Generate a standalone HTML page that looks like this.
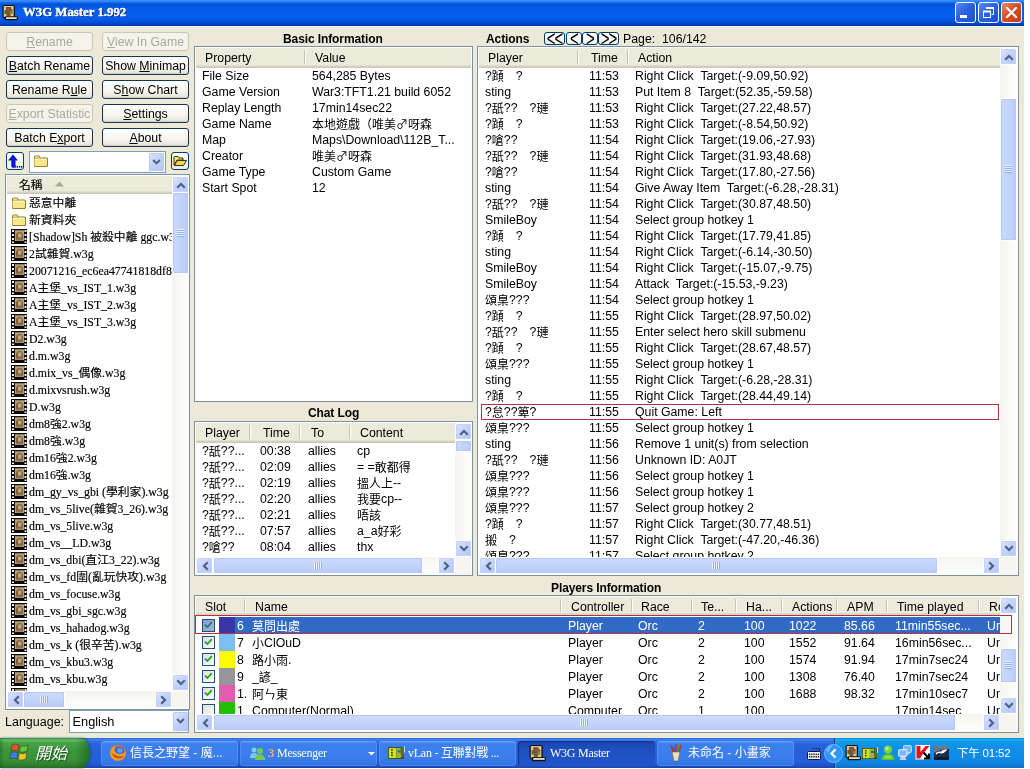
<!DOCTYPE html>
<html lang="zh-Hant"><head><meta charset="utf-8"><title>W3G Master 1.992</title>
<style>
html,body{margin:0;padding:0;background:#fff;overflow:hidden}
body{width:1030px;height:769px;position:relative;will-change:transform;font:12px "Liberation Sans","Noto Sans CJK TC",sans-serif;color:#000}
body div{position:absolute;box-sizing:content-box}
.t{white-space:nowrap;font:12.3px/16px "Liberation Sans","Noto Sans CJK TC",sans-serif;color:#000}
.b{white-space:nowrap;letter-spacing:-.1px;font:bold 12px/16px "Liberation Sans","Noto Sans CJK TC",sans-serif;color:#000}
.f{white-space:nowrap;font:11.8px/17px "Liberation Serif","Noto Sans CJK TC",serif;color:#000;-webkit-text-stroke:.15px #000}
.w{color:#fff}
.lv{border:1px solid #7e91a2;background:#fff}
.hd{background:linear-gradient(#ebeadb 0,#ebeadb calc(100% - 3px),#e2decd calc(100% - 3px),#e2decd calc(100% - 2px),#d6d2c2 calc(100% - 2px),#d6d2c2 calc(100% - 1px),#cbc7b8 calc(100% - 1px))}
.vtrack{background:linear-gradient(90deg,#f5f4ef,#fefefd)}
.htrack{background:linear-gradient(#f5f4ef,#fefefd)}
.vgrip{left:4px;width:7px;height:8px;background:repeating-linear-gradient(#eef4fe 0,#eef4fe 1px,#8cb0f8 1px,#8cb0f8 2px)}
.hgrip{top:4px;height:7px;width:8px;background:repeating-linear-gradient(90deg,#eef4fe 0,#eef4fe 1px,#8cb0f8 1px,#8cb0f8 2px)}
.btn{border:1px solid #143456;padding-top:1px;margin-top:0;border-radius:3px;background:linear-gradient(#fff,#f6f5ef 60%,#e3e1d6);text-align:center;white-space:nowrap;font:12.3px "Liberation Sans",sans-serif;color:#000;box-shadow:inset 0 -1px 1px #d6d0c5}
.btn.dis{border-color:#c9c7ba;background:#f5f4ea;color:#aca899;box-shadow:none}
.btn u{text-decoration:underline;text-underline-offset:1px}
.ttl{white-space:nowrap;font:bold 12.8px/16px "Liberation Serif","Noto Serif CJK SC",serif;color:#fff;text-shadow:1px 1px 0 #0a2a8a;-webkit-text-stroke:.4px #fff}
.nav{border:1px solid #003c74;border-radius:3px;background:linear-gradient(#fff,#f0efe8);text-align:center;font:15px/9px "Liberation Sans",sans-serif;color:#000;overflow:hidden;letter-spacing:-1px}
.st{white-space:nowrap;font:italic 400 16px/20px "Liberation Sans","Noto Sans CJK TC",sans-serif;color:#fff;text-shadow:1px 1px 1px #1a4a1a}
.tk{white-space:nowrap;font:12px/16px "Liberation Sans","Noto Sans CJK TC",sans-serif;color:#fff}
.tks{font-family:"Liberation Serif","Noto Sans CJK TC",serif;font-size:12px;letter-spacing:-.25px}
.sb{border-radius:2px;background:linear-gradient(135deg,#dfe8fe,#c6d5fd 40%,#b3c6f6);box-shadow:inset 0 0 0 1px #c3d3fb,inset 0 -1px 0 #9db4ea,0 0 0 1px #fff}
.thumb{border-radius:2px;box-shadow:inset 0 0 0 1px #b5c8f6,inset -1px -1px 0 #9db4ea,0 0 0 1px #fff}
.vth{background:linear-gradient(90deg,#cbdafd,#c3d4fc 50%,#b9cbf8)}
.hth{background:linear-gradient(#cbdafd,#c3d4fc 50%,#b9cbf8)}
.nav span{position:relative;top:1px;display:inline-block;transform:scale(1,1.5);transform-origin:50% 75%}
.cj{font-family:"Noto Sans CJK TC","Noto Sans CJK JP",sans-serif}
.c{position:relative;top:1px;line-height:0;font-size:12px;font-family:"Noto Sans CJK TC","Noto Sans CJK JP",sans-serif}

</style></head>
<body>
<div style="left:0px;top:0px;width:1024px;height:768px;background:#ece9d8"></div>
<div style="left:0px;top:0px;width:1024px;height:26px;background:linear-gradient(#3a8ffa 0,#338af8 1px,#1a6eee 2.5px,#0453dc 4px,#0354de 6px,#045ce8 9px,#0560f0 14px,#045aea 19px,#0350da 22px,#0243c6 24px,#0138aa 26px)"></div>
<div style="left:0px;top:26px;width:1024px;height:1px;background:#f6f4ea"></div>
<svg style="position:absolute;left:2px;top:5px" width="16" height="16" viewBox="0 0 16 16"><rect x="0.5" y="0" width="12.5" height="13" rx="1.5" fill="#14100c"/><rect x="1.7" y="1" width="10" height="11" fill="#d6c69c"/><path d="M4 2h5v2h1.5v5h-2v2h-4v-2h-2v-4h1.5z" fill="#6e5a2c"/><rect x="5.5" y="3" width="2.5" height="3" fill="#a4463c"/><rect x="8" y="6" width="2" height="3" fill="#8a8a3c"/><rect x="2.5" y="11.2" width="13.5" height="4" rx="1.5" fill="#14100c"/><rect x="4" y="12.2" width="10.8" height="1.8" fill="#e9dcc0"/></svg>
<div class="ttl" style="left:23px;top:4px;">W3G Master 1.992</div>
<div style="left:955px;top:2px;width:19px;height:19px;border:1px solid #fff;border-radius:3px;background:linear-gradient(135deg,#5d8cf0,#2a62e0 45%,#1c4fcc)"></div>
<div style="left:978px;top:2px;width:19px;height:19px;border:1px solid #fff;border-radius:3px;background:linear-gradient(135deg,#5d8cf0,#2a62e0 45%,#1c4fcc)"></div>
<div style="left:1001px;top:2px;width:19px;height:19px;border:1px solid #fff;border-radius:3px;background:linear-gradient(135deg,#e88a6a,#d8502a 45%,#c23a12)"></div>
<svg style="position:absolute;left:955px;top:2px" width="21" height="21"><rect x="5" y="13" width="7" height="3" fill="#fff"/></svg>
<svg style="position:absolute;left:978px;top:2px" width="21" height="21" fill="none" stroke="#fff"><path d="M8.5 6.5h7v6h-2" stroke-width="1"/><path d="M8 6h8" stroke-width="2"/><rect x="5.5" y="9.5" width="7" height="6"/><path d="M5 9.5h8" stroke-width="2"/></svg>
<svg style="position:absolute;left:1001px;top:2px" width="21" height="21" stroke="#fff" stroke-width="2.2" stroke-linecap="round"><path d="M6 6l9 9M15 6l-9 9"/></svg>
<div class="btn dis" style="left:6px;top:32px;width:85px;height:16px;line-height:16px"><u>R</u>ename</div>
<div class="btn dis" style="left:102px;top:32px;width:85px;height:16px;line-height:16px"><u>V</u>iew In Game</div>
<div class="btn" style="left:6px;top:56px;width:85px;height:16px;line-height:16px"><u>B</u>atch Rename</div>
<div class="btn" style="left:102px;top:56px;width:85px;height:16px;line-height:16px">Show <u>M</u>inimap</div>
<div class="btn" style="left:6px;top:80px;width:85px;height:16px;line-height:16px">Rename R<u>u</u>le</div>
<div class="btn" style="left:102px;top:80px;width:85px;height:16px;line-height:16px">S<u>h</u>ow Chart</div>
<div class="btn dis" style="left:6px;top:104px;width:85px;height:16px;line-height:16px"><u>E</u>xport Statistic</div>
<div class="btn" style="left:102px;top:104px;width:85px;height:16px;line-height:16px"><u>S</u>ettings</div>
<div class="btn" style="left:6px;top:128px;width:85px;height:16px;line-height:16px">Batch E<u>x</u>port</div>
<div class="btn" style="left:102px;top:128px;width:85px;height:16px;line-height:16px"><u>A</u>bout</div>
<div style="left:6px;top:152px;width:16px;height:16px;border:1px solid #003c74;border-radius:3px;background:linear-gradient(#fff,#ecebe5)"></div>
<svg style="position:absolute;left:6px;top:152px" width="18" height="18" viewBox="0 0 18 18"><path d="M7 2.8 L2.6 8.2 H5.6 V14 Q5.6 15.6 7.2 15.6 H9.6 V13.4 H9.2 V8.2 H11.4 Z" fill="#0a14dc" stroke="#060c8c" stroke-width=".5"/><rect x="10.6" y="14" width="1.4" height="1.6" fill="#101890"/><rect x="12.8" y="14" width="1.4" height="1.6" fill="#101890"/><rect x="15" y="14" width="1.4" height="1.6" fill="#101890"/></svg>
<div style="left:29px;top:151px;width:135px;height:20px;border:1px solid #7f9db9;background:#fff"></div>
<div style="left:149px;top:153px;width:15px;height:18px;border-radius:2px;background:linear-gradient(135deg,#e1eafe,#c3d3fd 45%,#b0c4f4);box-shadow:inset 0 0 0 1px #b7caf5"><svg width="9" height="9" viewBox="0 0 9 9" style="position:absolute;left:3px;top:5px"><path d="M0.4 2.7 L4.5 6.8 L8.6 2.7 L7.2 1.3 L4.5 4 L1.8 1.3Z" fill="#4d6185"/></svg></div>
<svg style="position:absolute;left:33px;top:153px" width="16" height="16" viewBox="0 0 16 16"><path d="M1 4 Q1 2.5 2.5 2.5 H5.5 Q6.5 2.5 7 3.5 L7.5 4.5 H13.5 Q15 4.5 15 6 V12.5 Q15 14 13.5 14 H2.5 Q1 14 1 12.5 Z" fill="#94802c"/><path d="M1.5 6.5 Q1.5 5.5 2.5 5.5 H13 Q14 5.5 14 6.5 V12 Q14 13 13 13 H2.5 Q1.5 13 1.5 12 Z" fill="#f6e78a"/><path d="M2 4 Q2 3.3 2.8 3.3 H5.6 L6.6 5 H2Z" fill="#efd96a"/><path d="M2.2 6.3 H13.3" stroke="#fffbd8" stroke-width="1"/></svg>
<div style="left:171px;top:152px;width:16px;height:16px;border:1px solid #003c74;border-radius:3px;background:linear-gradient(#fff,#ecebe5)"></div>
<svg style="position:absolute;left:172px;top:153px" width="16" height="16" viewBox="0 0 16 16"><path d="M2 4.5 Q2 3.5 3 3.5 H6 L7 5 H11 V7 H5 L2 12Z" fill="#f7e38a" stroke="#3a3000" stroke-width="1"/><path d="M2.5 12.5 L5.2 7.5 H14.5 L11.5 12.5Z" fill="#f2d65c" stroke="#3a3000" stroke-width="1"/></svg>
<div class="lv" style="left:5px;top:174px;width:183px;height:534px;"></div>
<div class="hd" style="left:7px;top:176px;width:165px;height:18px;"></div>
<div class="f" style="left:19px;top:176px;line-height:18px">名稱</div>
<svg style="position:absolute;left:55px;top:181px" width="9" height="6"><path d="M0 5.5 L4.5 0.5 L9 5.5Z" fill="#aca899"/></svg>
<div style="left:7px;top:194px;width:165px;height:497px;overflow:hidden">
<svg style="position:absolute;left:4px;top:1px" width="16" height="16" viewBox="0 0 16 16"><path d="M1 4 Q1 2.5 2.5 2.5 H5.5 Q6.5 2.5 7 3.5 L7.5 4.5 H13.5 Q15 4.5 15 6 V12.5 Q15 14 13.5 14 H2.5 Q1 14 1 12.5 Z" fill="#94802c"/><path d="M1.5 6.5 Q1.5 5.5 2.5 5.5 H13 Q14 5.5 14 6.5 V12 Q14 13 13 13 H2.5 Q1.5 13 1.5 12 Z" fill="#f6e78a"/><path d="M2 4 Q2 3.3 2.8 3.3 H5.6 L6.6 5 H2Z" fill="#efd96a"/><path d="M2.2 6.3 H13.3" stroke="#fffbd8" stroke-width="1"/></svg>
<div class="f" style="left:22px;top:1px;">惡意中離</div>
<svg style="position:absolute;left:4px;top:18px" width="16" height="16" viewBox="0 0 16 16"><path d="M1 4 Q1 2.5 2.5 2.5 H5.5 Q6.5 2.5 7 3.5 L7.5 4.5 H13.5 Q15 4.5 15 6 V12.5 Q15 14 13.5 14 H2.5 Q1 14 1 12.5 Z" fill="#94802c"/><path d="M1.5 6.5 Q1.5 5.5 2.5 5.5 H13 Q14 5.5 14 6.5 V12 Q14 13 13 13 H2.5 Q1.5 13 1.5 12 Z" fill="#f6e78a"/><path d="M2 4 Q2 3.3 2.8 3.3 H5.6 L6.6 5 H2Z" fill="#efd96a"/><path d="M2.2 6.3 H13.3" stroke="#fffbd8" stroke-width="1"/></svg>
<div class="f" style="left:22px;top:18px;">新資料夾</div>
<svg style="position:absolute;left:4px;top:35px" width="16" height="16" viewBox="0 0 16 16"><rect x="0" y="0" width="16" height="15" fill="#0c0a08"/><rect x="4" y="1" width="9" height="11" fill="#b9a27a"/><path d="M5 11 V7 Q5 3 8.5 3 Q12 3 12 7 V11Z" fill="#7a5d3c"/><rect x="7" y="4.5" width="3.5" height="4" fill="#caa878"/><rect x="5" y="9.5" width="7" height="2" fill="#8f7452"/><rect x="4" y="1" width="9" height="1" fill="#8a7a5c"/><g fill="#f4f2ea"><rect x="1" y="1" width="2" height="2"/><rect x="1" y="5" width="2" height="2"/><rect x="1" y="9" width="2" height="2"/><rect x="1" y="12.5" width="2" height="1.5"/><rect x="13.5" y="1" width="2" height="2"/><rect x="13.5" y="5" width="2" height="2"/><rect x="13.5" y="9" width="2" height="2"/><rect x="13.5" y="12.5" width="2" height="1.5"/></g></svg>
<div class="f" style="left:22px;top:35px;">[Shadow]Sh 被殺中離 ggc.w3g</div>
<svg style="position:absolute;left:4px;top:52px" width="16" height="16" viewBox="0 0 16 16"><rect x="0" y="0" width="16" height="15" fill="#0c0a08"/><rect x="4" y="1" width="9" height="11" fill="#b9a27a"/><path d="M5 11 V7 Q5 3 8.5 3 Q12 3 12 7 V11Z" fill="#7a5d3c"/><rect x="7" y="4.5" width="3.5" height="4" fill="#caa878"/><rect x="5" y="9.5" width="7" height="2" fill="#8f7452"/><rect x="4" y="1" width="9" height="1" fill="#8a7a5c"/><g fill="#f4f2ea"><rect x="1" y="1" width="2" height="2"/><rect x="1" y="5" width="2" height="2"/><rect x="1" y="9" width="2" height="2"/><rect x="1" y="12.5" width="2" height="1.5"/><rect x="13.5" y="1" width="2" height="2"/><rect x="13.5" y="5" width="2" height="2"/><rect x="13.5" y="9" width="2" height="2"/><rect x="13.5" y="12.5" width="2" height="1.5"/></g></svg>
<div class="f" style="left:22px;top:52px;">2試雜賀.w3g</div>
<svg style="position:absolute;left:4px;top:69px" width="16" height="16" viewBox="0 0 16 16"><rect x="0" y="0" width="16" height="15" fill="#0c0a08"/><rect x="4" y="1" width="9" height="11" fill="#b9a27a"/><path d="M5 11 V7 Q5 3 8.5 3 Q12 3 12 7 V11Z" fill="#7a5d3c"/><rect x="7" y="4.5" width="3.5" height="4" fill="#caa878"/><rect x="5" y="9.5" width="7" height="2" fill="#8f7452"/><rect x="4" y="1" width="9" height="1" fill="#8a7a5c"/><g fill="#f4f2ea"><rect x="1" y="1" width="2" height="2"/><rect x="1" y="5" width="2" height="2"/><rect x="1" y="9" width="2" height="2"/><rect x="1" y="12.5" width="2" height="1.5"/><rect x="13.5" y="1" width="2" height="2"/><rect x="13.5" y="5" width="2" height="2"/><rect x="13.5" y="9" width="2" height="2"/><rect x="13.5" y="12.5" width="2" height="1.5"/></g></svg>
<div class="f" style="left:22px;top:69px;">20071216_ec6ea47741818df88</div>
<svg style="position:absolute;left:4px;top:86px" width="16" height="16" viewBox="0 0 16 16"><rect x="0" y="0" width="16" height="15" fill="#0c0a08"/><rect x="4" y="1" width="9" height="11" fill="#b9a27a"/><path d="M5 11 V7 Q5 3 8.5 3 Q12 3 12 7 V11Z" fill="#7a5d3c"/><rect x="7" y="4.5" width="3.5" height="4" fill="#caa878"/><rect x="5" y="9.5" width="7" height="2" fill="#8f7452"/><rect x="4" y="1" width="9" height="1" fill="#8a7a5c"/><g fill="#f4f2ea"><rect x="1" y="1" width="2" height="2"/><rect x="1" y="5" width="2" height="2"/><rect x="1" y="9" width="2" height="2"/><rect x="1" y="12.5" width="2" height="1.5"/><rect x="13.5" y="1" width="2" height="2"/><rect x="13.5" y="5" width="2" height="2"/><rect x="13.5" y="9" width="2" height="2"/><rect x="13.5" y="12.5" width="2" height="1.5"/></g></svg>
<div class="f" style="left:22px;top:86px;">A主堡_vs_IST_1.w3g</div>
<svg style="position:absolute;left:4px;top:103px" width="16" height="16" viewBox="0 0 16 16"><rect x="0" y="0" width="16" height="15" fill="#0c0a08"/><rect x="4" y="1" width="9" height="11" fill="#b9a27a"/><path d="M5 11 V7 Q5 3 8.5 3 Q12 3 12 7 V11Z" fill="#7a5d3c"/><rect x="7" y="4.5" width="3.5" height="4" fill="#caa878"/><rect x="5" y="9.5" width="7" height="2" fill="#8f7452"/><rect x="4" y="1" width="9" height="1" fill="#8a7a5c"/><g fill="#f4f2ea"><rect x="1" y="1" width="2" height="2"/><rect x="1" y="5" width="2" height="2"/><rect x="1" y="9" width="2" height="2"/><rect x="1" y="12.5" width="2" height="1.5"/><rect x="13.5" y="1" width="2" height="2"/><rect x="13.5" y="5" width="2" height="2"/><rect x="13.5" y="9" width="2" height="2"/><rect x="13.5" y="12.5" width="2" height="1.5"/></g></svg>
<div class="f" style="left:22px;top:103px;">A主堡_vs_IST_2.w3g</div>
<svg style="position:absolute;left:4px;top:120px" width="16" height="16" viewBox="0 0 16 16"><rect x="0" y="0" width="16" height="15" fill="#0c0a08"/><rect x="4" y="1" width="9" height="11" fill="#b9a27a"/><path d="M5 11 V7 Q5 3 8.5 3 Q12 3 12 7 V11Z" fill="#7a5d3c"/><rect x="7" y="4.5" width="3.5" height="4" fill="#caa878"/><rect x="5" y="9.5" width="7" height="2" fill="#8f7452"/><rect x="4" y="1" width="9" height="1" fill="#8a7a5c"/><g fill="#f4f2ea"><rect x="1" y="1" width="2" height="2"/><rect x="1" y="5" width="2" height="2"/><rect x="1" y="9" width="2" height="2"/><rect x="1" y="12.5" width="2" height="1.5"/><rect x="13.5" y="1" width="2" height="2"/><rect x="13.5" y="5" width="2" height="2"/><rect x="13.5" y="9" width="2" height="2"/><rect x="13.5" y="12.5" width="2" height="1.5"/></g></svg>
<div class="f" style="left:22px;top:120px;">A主堡_vs_IST_3.w3g</div>
<svg style="position:absolute;left:4px;top:137px" width="16" height="16" viewBox="0 0 16 16"><rect x="0" y="0" width="16" height="15" fill="#0c0a08"/><rect x="4" y="1" width="9" height="11" fill="#b9a27a"/><path d="M5 11 V7 Q5 3 8.5 3 Q12 3 12 7 V11Z" fill="#7a5d3c"/><rect x="7" y="4.5" width="3.5" height="4" fill="#caa878"/><rect x="5" y="9.5" width="7" height="2" fill="#8f7452"/><rect x="4" y="1" width="9" height="1" fill="#8a7a5c"/><g fill="#f4f2ea"><rect x="1" y="1" width="2" height="2"/><rect x="1" y="5" width="2" height="2"/><rect x="1" y="9" width="2" height="2"/><rect x="1" y="12.5" width="2" height="1.5"/><rect x="13.5" y="1" width="2" height="2"/><rect x="13.5" y="5" width="2" height="2"/><rect x="13.5" y="9" width="2" height="2"/><rect x="13.5" y="12.5" width="2" height="1.5"/></g></svg>
<div class="f" style="left:22px;top:137px;">D2.w3g</div>
<svg style="position:absolute;left:4px;top:154px" width="16" height="16" viewBox="0 0 16 16"><rect x="0" y="0" width="16" height="15" fill="#0c0a08"/><rect x="4" y="1" width="9" height="11" fill="#b9a27a"/><path d="M5 11 V7 Q5 3 8.5 3 Q12 3 12 7 V11Z" fill="#7a5d3c"/><rect x="7" y="4.5" width="3.5" height="4" fill="#caa878"/><rect x="5" y="9.5" width="7" height="2" fill="#8f7452"/><rect x="4" y="1" width="9" height="1" fill="#8a7a5c"/><g fill="#f4f2ea"><rect x="1" y="1" width="2" height="2"/><rect x="1" y="5" width="2" height="2"/><rect x="1" y="9" width="2" height="2"/><rect x="1" y="12.5" width="2" height="1.5"/><rect x="13.5" y="1" width="2" height="2"/><rect x="13.5" y="5" width="2" height="2"/><rect x="13.5" y="9" width="2" height="2"/><rect x="13.5" y="12.5" width="2" height="1.5"/></g></svg>
<div class="f" style="left:22px;top:154px;">d.m.w3g</div>
<svg style="position:absolute;left:4px;top:171px" width="16" height="16" viewBox="0 0 16 16"><rect x="0" y="0" width="16" height="15" fill="#0c0a08"/><rect x="4" y="1" width="9" height="11" fill="#b9a27a"/><path d="M5 11 V7 Q5 3 8.5 3 Q12 3 12 7 V11Z" fill="#7a5d3c"/><rect x="7" y="4.5" width="3.5" height="4" fill="#caa878"/><rect x="5" y="9.5" width="7" height="2" fill="#8f7452"/><rect x="4" y="1" width="9" height="1" fill="#8a7a5c"/><g fill="#f4f2ea"><rect x="1" y="1" width="2" height="2"/><rect x="1" y="5" width="2" height="2"/><rect x="1" y="9" width="2" height="2"/><rect x="1" y="12.5" width="2" height="1.5"/><rect x="13.5" y="1" width="2" height="2"/><rect x="13.5" y="5" width="2" height="2"/><rect x="13.5" y="9" width="2" height="2"/><rect x="13.5" y="12.5" width="2" height="1.5"/></g></svg>
<div class="f" style="left:22px;top:171px;">d.mix_vs_偶像.w3g</div>
<svg style="position:absolute;left:4px;top:188px" width="16" height="16" viewBox="0 0 16 16"><rect x="0" y="0" width="16" height="15" fill="#0c0a08"/><rect x="4" y="1" width="9" height="11" fill="#b9a27a"/><path d="M5 11 V7 Q5 3 8.5 3 Q12 3 12 7 V11Z" fill="#7a5d3c"/><rect x="7" y="4.5" width="3.5" height="4" fill="#caa878"/><rect x="5" y="9.5" width="7" height="2" fill="#8f7452"/><rect x="4" y="1" width="9" height="1" fill="#8a7a5c"/><g fill="#f4f2ea"><rect x="1" y="1" width="2" height="2"/><rect x="1" y="5" width="2" height="2"/><rect x="1" y="9" width="2" height="2"/><rect x="1" y="12.5" width="2" height="1.5"/><rect x="13.5" y="1" width="2" height="2"/><rect x="13.5" y="5" width="2" height="2"/><rect x="13.5" y="9" width="2" height="2"/><rect x="13.5" y="12.5" width="2" height="1.5"/></g></svg>
<div class="f" style="left:22px;top:188px;">d.mixvsrush.w3g</div>
<svg style="position:absolute;left:4px;top:205px" width="16" height="16" viewBox="0 0 16 16"><rect x="0" y="0" width="16" height="15" fill="#0c0a08"/><rect x="4" y="1" width="9" height="11" fill="#b9a27a"/><path d="M5 11 V7 Q5 3 8.5 3 Q12 3 12 7 V11Z" fill="#7a5d3c"/><rect x="7" y="4.5" width="3.5" height="4" fill="#caa878"/><rect x="5" y="9.5" width="7" height="2" fill="#8f7452"/><rect x="4" y="1" width="9" height="1" fill="#8a7a5c"/><g fill="#f4f2ea"><rect x="1" y="1" width="2" height="2"/><rect x="1" y="5" width="2" height="2"/><rect x="1" y="9" width="2" height="2"/><rect x="1" y="12.5" width="2" height="1.5"/><rect x="13.5" y="1" width="2" height="2"/><rect x="13.5" y="5" width="2" height="2"/><rect x="13.5" y="9" width="2" height="2"/><rect x="13.5" y="12.5" width="2" height="1.5"/></g></svg>
<div class="f" style="left:22px;top:205px;">D.w3g</div>
<svg style="position:absolute;left:4px;top:222px" width="16" height="16" viewBox="0 0 16 16"><rect x="0" y="0" width="16" height="15" fill="#0c0a08"/><rect x="4" y="1" width="9" height="11" fill="#b9a27a"/><path d="M5 11 V7 Q5 3 8.5 3 Q12 3 12 7 V11Z" fill="#7a5d3c"/><rect x="7" y="4.5" width="3.5" height="4" fill="#caa878"/><rect x="5" y="9.5" width="7" height="2" fill="#8f7452"/><rect x="4" y="1" width="9" height="1" fill="#8a7a5c"/><g fill="#f4f2ea"><rect x="1" y="1" width="2" height="2"/><rect x="1" y="5" width="2" height="2"/><rect x="1" y="9" width="2" height="2"/><rect x="1" y="12.5" width="2" height="1.5"/><rect x="13.5" y="1" width="2" height="2"/><rect x="13.5" y="5" width="2" height="2"/><rect x="13.5" y="9" width="2" height="2"/><rect x="13.5" y="12.5" width="2" height="1.5"/></g></svg>
<div class="f" style="left:22px;top:222px;">dm8強2.w3g</div>
<svg style="position:absolute;left:4px;top:239px" width="16" height="16" viewBox="0 0 16 16"><rect x="0" y="0" width="16" height="15" fill="#0c0a08"/><rect x="4" y="1" width="9" height="11" fill="#b9a27a"/><path d="M5 11 V7 Q5 3 8.5 3 Q12 3 12 7 V11Z" fill="#7a5d3c"/><rect x="7" y="4.5" width="3.5" height="4" fill="#caa878"/><rect x="5" y="9.5" width="7" height="2" fill="#8f7452"/><rect x="4" y="1" width="9" height="1" fill="#8a7a5c"/><g fill="#f4f2ea"><rect x="1" y="1" width="2" height="2"/><rect x="1" y="5" width="2" height="2"/><rect x="1" y="9" width="2" height="2"/><rect x="1" y="12.5" width="2" height="1.5"/><rect x="13.5" y="1" width="2" height="2"/><rect x="13.5" y="5" width="2" height="2"/><rect x="13.5" y="9" width="2" height="2"/><rect x="13.5" y="12.5" width="2" height="1.5"/></g></svg>
<div class="f" style="left:22px;top:239px;">dm8強.w3g</div>
<svg style="position:absolute;left:4px;top:256px" width="16" height="16" viewBox="0 0 16 16"><rect x="0" y="0" width="16" height="15" fill="#0c0a08"/><rect x="4" y="1" width="9" height="11" fill="#b9a27a"/><path d="M5 11 V7 Q5 3 8.5 3 Q12 3 12 7 V11Z" fill="#7a5d3c"/><rect x="7" y="4.5" width="3.5" height="4" fill="#caa878"/><rect x="5" y="9.5" width="7" height="2" fill="#8f7452"/><rect x="4" y="1" width="9" height="1" fill="#8a7a5c"/><g fill="#f4f2ea"><rect x="1" y="1" width="2" height="2"/><rect x="1" y="5" width="2" height="2"/><rect x="1" y="9" width="2" height="2"/><rect x="1" y="12.5" width="2" height="1.5"/><rect x="13.5" y="1" width="2" height="2"/><rect x="13.5" y="5" width="2" height="2"/><rect x="13.5" y="9" width="2" height="2"/><rect x="13.5" y="12.5" width="2" height="1.5"/></g></svg>
<div class="f" style="left:22px;top:256px;">dm16強2.w3g</div>
<svg style="position:absolute;left:4px;top:273px" width="16" height="16" viewBox="0 0 16 16"><rect x="0" y="0" width="16" height="15" fill="#0c0a08"/><rect x="4" y="1" width="9" height="11" fill="#b9a27a"/><path d="M5 11 V7 Q5 3 8.5 3 Q12 3 12 7 V11Z" fill="#7a5d3c"/><rect x="7" y="4.5" width="3.5" height="4" fill="#caa878"/><rect x="5" y="9.5" width="7" height="2" fill="#8f7452"/><rect x="4" y="1" width="9" height="1" fill="#8a7a5c"/><g fill="#f4f2ea"><rect x="1" y="1" width="2" height="2"/><rect x="1" y="5" width="2" height="2"/><rect x="1" y="9" width="2" height="2"/><rect x="1" y="12.5" width="2" height="1.5"/><rect x="13.5" y="1" width="2" height="2"/><rect x="13.5" y="5" width="2" height="2"/><rect x="13.5" y="9" width="2" height="2"/><rect x="13.5" y="12.5" width="2" height="1.5"/></g></svg>
<div class="f" style="left:22px;top:273px;">dm16強.w3g</div>
<svg style="position:absolute;left:4px;top:290px" width="16" height="16" viewBox="0 0 16 16"><rect x="0" y="0" width="16" height="15" fill="#0c0a08"/><rect x="4" y="1" width="9" height="11" fill="#b9a27a"/><path d="M5 11 V7 Q5 3 8.5 3 Q12 3 12 7 V11Z" fill="#7a5d3c"/><rect x="7" y="4.5" width="3.5" height="4" fill="#caa878"/><rect x="5" y="9.5" width="7" height="2" fill="#8f7452"/><rect x="4" y="1" width="9" height="1" fill="#8a7a5c"/><g fill="#f4f2ea"><rect x="1" y="1" width="2" height="2"/><rect x="1" y="5" width="2" height="2"/><rect x="1" y="9" width="2" height="2"/><rect x="1" y="12.5" width="2" height="1.5"/><rect x="13.5" y="1" width="2" height="2"/><rect x="13.5" y="5" width="2" height="2"/><rect x="13.5" y="9" width="2" height="2"/><rect x="13.5" y="12.5" width="2" height="1.5"/></g></svg>
<div class="f" style="left:22px;top:290px;">dm_gy_vs_gbi (學利家).w3g</div>
<svg style="position:absolute;left:4px;top:307px" width="16" height="16" viewBox="0 0 16 16"><rect x="0" y="0" width="16" height="15" fill="#0c0a08"/><rect x="4" y="1" width="9" height="11" fill="#b9a27a"/><path d="M5 11 V7 Q5 3 8.5 3 Q12 3 12 7 V11Z" fill="#7a5d3c"/><rect x="7" y="4.5" width="3.5" height="4" fill="#caa878"/><rect x="5" y="9.5" width="7" height="2" fill="#8f7452"/><rect x="4" y="1" width="9" height="1" fill="#8a7a5c"/><g fill="#f4f2ea"><rect x="1" y="1" width="2" height="2"/><rect x="1" y="5" width="2" height="2"/><rect x="1" y="9" width="2" height="2"/><rect x="1" y="12.5" width="2" height="1.5"/><rect x="13.5" y="1" width="2" height="2"/><rect x="13.5" y="5" width="2" height="2"/><rect x="13.5" y="9" width="2" height="2"/><rect x="13.5" y="12.5" width="2" height="1.5"/></g></svg>
<div class="f" style="left:22px;top:307px;">dm_vs_5live(雜賀3_26).w3g</div>
<svg style="position:absolute;left:4px;top:324px" width="16" height="16" viewBox="0 0 16 16"><rect x="0" y="0" width="16" height="15" fill="#0c0a08"/><rect x="4" y="1" width="9" height="11" fill="#b9a27a"/><path d="M5 11 V7 Q5 3 8.5 3 Q12 3 12 7 V11Z" fill="#7a5d3c"/><rect x="7" y="4.5" width="3.5" height="4" fill="#caa878"/><rect x="5" y="9.5" width="7" height="2" fill="#8f7452"/><rect x="4" y="1" width="9" height="1" fill="#8a7a5c"/><g fill="#f4f2ea"><rect x="1" y="1" width="2" height="2"/><rect x="1" y="5" width="2" height="2"/><rect x="1" y="9" width="2" height="2"/><rect x="1" y="12.5" width="2" height="1.5"/><rect x="13.5" y="1" width="2" height="2"/><rect x="13.5" y="5" width="2" height="2"/><rect x="13.5" y="9" width="2" height="2"/><rect x="13.5" y="12.5" width="2" height="1.5"/></g></svg>
<div class="f" style="left:22px;top:324px;">dm_vs_5live.w3g</div>
<svg style="position:absolute;left:4px;top:341px" width="16" height="16" viewBox="0 0 16 16"><rect x="0" y="0" width="16" height="15" fill="#0c0a08"/><rect x="4" y="1" width="9" height="11" fill="#b9a27a"/><path d="M5 11 V7 Q5 3 8.5 3 Q12 3 12 7 V11Z" fill="#7a5d3c"/><rect x="7" y="4.5" width="3.5" height="4" fill="#caa878"/><rect x="5" y="9.5" width="7" height="2" fill="#8f7452"/><rect x="4" y="1" width="9" height="1" fill="#8a7a5c"/><g fill="#f4f2ea"><rect x="1" y="1" width="2" height="2"/><rect x="1" y="5" width="2" height="2"/><rect x="1" y="9" width="2" height="2"/><rect x="1" y="12.5" width="2" height="1.5"/><rect x="13.5" y="1" width="2" height="2"/><rect x="13.5" y="5" width="2" height="2"/><rect x="13.5" y="9" width="2" height="2"/><rect x="13.5" y="12.5" width="2" height="1.5"/></g></svg>
<div class="f" style="left:22px;top:341px;">dm_vs__LD.w3g</div>
<svg style="position:absolute;left:4px;top:358px" width="16" height="16" viewBox="0 0 16 16"><rect x="0" y="0" width="16" height="15" fill="#0c0a08"/><rect x="4" y="1" width="9" height="11" fill="#b9a27a"/><path d="M5 11 V7 Q5 3 8.5 3 Q12 3 12 7 V11Z" fill="#7a5d3c"/><rect x="7" y="4.5" width="3.5" height="4" fill="#caa878"/><rect x="5" y="9.5" width="7" height="2" fill="#8f7452"/><rect x="4" y="1" width="9" height="1" fill="#8a7a5c"/><g fill="#f4f2ea"><rect x="1" y="1" width="2" height="2"/><rect x="1" y="5" width="2" height="2"/><rect x="1" y="9" width="2" height="2"/><rect x="1" y="12.5" width="2" height="1.5"/><rect x="13.5" y="1" width="2" height="2"/><rect x="13.5" y="5" width="2" height="2"/><rect x="13.5" y="9" width="2" height="2"/><rect x="13.5" y="12.5" width="2" height="1.5"/></g></svg>
<div class="f" style="left:22px;top:358px;">dm_vs_dbi(直江3_22).w3g</div>
<svg style="position:absolute;left:4px;top:375px" width="16" height="16" viewBox="0 0 16 16"><rect x="0" y="0" width="16" height="15" fill="#0c0a08"/><rect x="4" y="1" width="9" height="11" fill="#b9a27a"/><path d="M5 11 V7 Q5 3 8.5 3 Q12 3 12 7 V11Z" fill="#7a5d3c"/><rect x="7" y="4.5" width="3.5" height="4" fill="#caa878"/><rect x="5" y="9.5" width="7" height="2" fill="#8f7452"/><rect x="4" y="1" width="9" height="1" fill="#8a7a5c"/><g fill="#f4f2ea"><rect x="1" y="1" width="2" height="2"/><rect x="1" y="5" width="2" height="2"/><rect x="1" y="9" width="2" height="2"/><rect x="1" y="12.5" width="2" height="1.5"/><rect x="13.5" y="1" width="2" height="2"/><rect x="13.5" y="5" width="2" height="2"/><rect x="13.5" y="9" width="2" height="2"/><rect x="13.5" y="12.5" width="2" height="1.5"/></g></svg>
<div class="f" style="left:22px;top:375px;">dm_vs_fd圍(亂玩快攻).w3g</div>
<svg style="position:absolute;left:4px;top:392px" width="16" height="16" viewBox="0 0 16 16"><rect x="0" y="0" width="16" height="15" fill="#0c0a08"/><rect x="4" y="1" width="9" height="11" fill="#b9a27a"/><path d="M5 11 V7 Q5 3 8.5 3 Q12 3 12 7 V11Z" fill="#7a5d3c"/><rect x="7" y="4.5" width="3.5" height="4" fill="#caa878"/><rect x="5" y="9.5" width="7" height="2" fill="#8f7452"/><rect x="4" y="1" width="9" height="1" fill="#8a7a5c"/><g fill="#f4f2ea"><rect x="1" y="1" width="2" height="2"/><rect x="1" y="5" width="2" height="2"/><rect x="1" y="9" width="2" height="2"/><rect x="1" y="12.5" width="2" height="1.5"/><rect x="13.5" y="1" width="2" height="2"/><rect x="13.5" y="5" width="2" height="2"/><rect x="13.5" y="9" width="2" height="2"/><rect x="13.5" y="12.5" width="2" height="1.5"/></g></svg>
<div class="f" style="left:22px;top:392px;">dm_vs_focuse.w3g</div>
<svg style="position:absolute;left:4px;top:409px" width="16" height="16" viewBox="0 0 16 16"><rect x="0" y="0" width="16" height="15" fill="#0c0a08"/><rect x="4" y="1" width="9" height="11" fill="#b9a27a"/><path d="M5 11 V7 Q5 3 8.5 3 Q12 3 12 7 V11Z" fill="#7a5d3c"/><rect x="7" y="4.5" width="3.5" height="4" fill="#caa878"/><rect x="5" y="9.5" width="7" height="2" fill="#8f7452"/><rect x="4" y="1" width="9" height="1" fill="#8a7a5c"/><g fill="#f4f2ea"><rect x="1" y="1" width="2" height="2"/><rect x="1" y="5" width="2" height="2"/><rect x="1" y="9" width="2" height="2"/><rect x="1" y="12.5" width="2" height="1.5"/><rect x="13.5" y="1" width="2" height="2"/><rect x="13.5" y="5" width="2" height="2"/><rect x="13.5" y="9" width="2" height="2"/><rect x="13.5" y="12.5" width="2" height="1.5"/></g></svg>
<div class="f" style="left:22px;top:409px;">dm_vs_gbi_sgc.w3g</div>
<svg style="position:absolute;left:4px;top:426px" width="16" height="16" viewBox="0 0 16 16"><rect x="0" y="0" width="16" height="15" fill="#0c0a08"/><rect x="4" y="1" width="9" height="11" fill="#b9a27a"/><path d="M5 11 V7 Q5 3 8.5 3 Q12 3 12 7 V11Z" fill="#7a5d3c"/><rect x="7" y="4.5" width="3.5" height="4" fill="#caa878"/><rect x="5" y="9.5" width="7" height="2" fill="#8f7452"/><rect x="4" y="1" width="9" height="1" fill="#8a7a5c"/><g fill="#f4f2ea"><rect x="1" y="1" width="2" height="2"/><rect x="1" y="5" width="2" height="2"/><rect x="1" y="9" width="2" height="2"/><rect x="1" y="12.5" width="2" height="1.5"/><rect x="13.5" y="1" width="2" height="2"/><rect x="13.5" y="5" width="2" height="2"/><rect x="13.5" y="9" width="2" height="2"/><rect x="13.5" y="12.5" width="2" height="1.5"/></g></svg>
<div class="f" style="left:22px;top:426px;">dm_vs_hahadog.w3g</div>
<svg style="position:absolute;left:4px;top:443px" width="16" height="16" viewBox="0 0 16 16"><rect x="0" y="0" width="16" height="15" fill="#0c0a08"/><rect x="4" y="1" width="9" height="11" fill="#b9a27a"/><path d="M5 11 V7 Q5 3 8.5 3 Q12 3 12 7 V11Z" fill="#7a5d3c"/><rect x="7" y="4.5" width="3.5" height="4" fill="#caa878"/><rect x="5" y="9.5" width="7" height="2" fill="#8f7452"/><rect x="4" y="1" width="9" height="1" fill="#8a7a5c"/><g fill="#f4f2ea"><rect x="1" y="1" width="2" height="2"/><rect x="1" y="5" width="2" height="2"/><rect x="1" y="9" width="2" height="2"/><rect x="1" y="12.5" width="2" height="1.5"/><rect x="13.5" y="1" width="2" height="2"/><rect x="13.5" y="5" width="2" height="2"/><rect x="13.5" y="9" width="2" height="2"/><rect x="13.5" y="12.5" width="2" height="1.5"/></g></svg>
<div class="f" style="left:22px;top:443px;">dm_vs_k (很辛苦).w3g</div>
<svg style="position:absolute;left:4px;top:460px" width="16" height="16" viewBox="0 0 16 16"><rect x="0" y="0" width="16" height="15" fill="#0c0a08"/><rect x="4" y="1" width="9" height="11" fill="#b9a27a"/><path d="M5 11 V7 Q5 3 8.5 3 Q12 3 12 7 V11Z" fill="#7a5d3c"/><rect x="7" y="4.5" width="3.5" height="4" fill="#caa878"/><rect x="5" y="9.5" width="7" height="2" fill="#8f7452"/><rect x="4" y="1" width="9" height="1" fill="#8a7a5c"/><g fill="#f4f2ea"><rect x="1" y="1" width="2" height="2"/><rect x="1" y="5" width="2" height="2"/><rect x="1" y="9" width="2" height="2"/><rect x="1" y="12.5" width="2" height="1.5"/><rect x="13.5" y="1" width="2" height="2"/><rect x="13.5" y="5" width="2" height="2"/><rect x="13.5" y="9" width="2" height="2"/><rect x="13.5" y="12.5" width="2" height="1.5"/></g></svg>
<div class="f" style="left:22px;top:460px;">dm_vs_kbu3.w3g</div>
<svg style="position:absolute;left:4px;top:477px" width="16" height="16" viewBox="0 0 16 16"><rect x="0" y="0" width="16" height="15" fill="#0c0a08"/><rect x="4" y="1" width="9" height="11" fill="#b9a27a"/><path d="M5 11 V7 Q5 3 8.5 3 Q12 3 12 7 V11Z" fill="#7a5d3c"/><rect x="7" y="4.5" width="3.5" height="4" fill="#caa878"/><rect x="5" y="9.5" width="7" height="2" fill="#8f7452"/><rect x="4" y="1" width="9" height="1" fill="#8a7a5c"/><g fill="#f4f2ea"><rect x="1" y="1" width="2" height="2"/><rect x="1" y="5" width="2" height="2"/><rect x="1" y="9" width="2" height="2"/><rect x="1" y="12.5" width="2" height="1.5"/><rect x="13.5" y="1" width="2" height="2"/><rect x="13.5" y="5" width="2" height="2"/><rect x="13.5" y="9" width="2" height="2"/><rect x="13.5" y="12.5" width="2" height="1.5"/></g></svg>
<div class="f" style="left:22px;top:477px;">dm_vs_kbu.w3g</div>
<svg style="position:absolute;left:4px;top:494px" width="16" height="16" viewBox="0 0 16 16"><rect x="0" y="0" width="16" height="15" fill="#0c0a08"/><rect x="4" y="1" width="9" height="11" fill="#b9a27a"/><path d="M5 11 V7 Q5 3 8.5 3 Q12 3 12 7 V11Z" fill="#7a5d3c"/><rect x="7" y="4.5" width="3.5" height="4" fill="#caa878"/><rect x="5" y="9.5" width="7" height="2" fill="#8f7452"/><rect x="4" y="1" width="9" height="1" fill="#8a7a5c"/><g fill="#f4f2ea"><rect x="1" y="1" width="2" height="2"/><rect x="1" y="5" width="2" height="2"/><rect x="1" y="9" width="2" height="2"/><rect x="1" y="12.5" width="2" height="1.5"/><rect x="13.5" y="1" width="2" height="2"/><rect x="13.5" y="5" width="2" height="2"/><rect x="13.5" y="9" width="2" height="2"/><rect x="13.5" y="12.5" width="2" height="1.5"/></g></svg>
</div>
<div class="vtrack" style="left:172px;top:176px;width:17px;height:515px;"></div>
<div class="sb" style="left:173px;top:177px;width:15px;height:15px;"><svg width="10" height="10" viewBox="0 0 9 9" style="position:absolute;left:2.5px;top:2.5px"><path d="M0.4 6.3 L4.5 2.2 L8.6 6.3 L7.2 7.7 L4.5 5 L1.8 7.7Z" fill="#4d6185"/></svg></div>
<div class="sb" style="left:173px;top:675px;width:15px;height:15px;"><svg width="10" height="10" viewBox="0 0 9 9" style="position:absolute;left:2.5px;top:2.5px"><path d="M0.4 2.7 L4.5 6.8 L8.6 2.7 L7.2 1.3 L4.5 4 L1.8 1.3Z" fill="#4d6185"/></svg></div>
<div class="thumb vth" style="left:173px;top:193px;width:15px;height:80px;"><div class="vgrip" style="top:36px"></div></div>
<div class="htrack" style="left:7px;top:691px;width:165px;height:17px;"></div>
<div class="sb" style="left:8px;top:692px;width:15px;height:15px;"><svg width="10" height="10" viewBox="0 0 9 9" style="position:absolute;left:2.5px;top:2.5px"><path d="M6.3 0.4 L2.2 4.5 L6.3 8.6 L7.7 7.2 L5 4.5 L7.7 1.8Z" fill="#4d6185"/></svg></div>
<div class="sb" style="left:156px;top:692px;width:15px;height:15px;"><svg width="10" height="10" viewBox="0 0 9 9" style="position:absolute;left:2.5px;top:2.5px"><path d="M2.7 0.4 L6.8 4.5 L2.7 8.6 L1.3 7.2 L4 4.5 L1.3 1.8Z" fill="#4d6185"/></svg></div>
<div class="thumb hth" style="left:24px;top:692px;width:40px;height:15px;"><div class="hgrip" style="left:16px"></div></div>
<div style="left:172px;top:691px;width:16px;height:17px;background:#f6f5f0"></div>
<div class="t" style="left:5px;top:714px;font-size:12.5px">Language:</div>
<div style="left:69px;top:710px;width:118px;height:21px;border:1px solid #7f9db9;background:#fff"></div>
<div class="t" style="left:72.5px;top:714px;font-size:12.8px">English</div>
<div style="left:173px;top:712px;width:15px;height:19px;border-radius:2px;background:linear-gradient(135deg,#e1eafe,#c3d3fd 45%,#b0c4f4);box-shadow:inset 0 0 0 1px #b7caf5"><svg width="9" height="9" viewBox="0 0 9 9" style="position:absolute;left:3px;top:5px"><path d="M0.4 2.7 L4.5 6.8 L8.6 2.7 L7.2 1.3 L4.5 4 L1.8 1.3Z" fill="#4d6185"/></svg></div>
<div class="b" style="left:283px;top:31px;">Basic Information</div>
<div class="lv" style="left:194px;top:46px;width:277px;height:354px;"></div>
<div class="hd" style="left:196px;top:48px;width:275px;height:20px;"></div>
<div class="t" style="left:205px;top:50px;">Property</div>
<div style="left:304px;top:50px;width:1px;height:14px;background:#c7c5b2"></div>
<div style="left:305px;top:50px;width:1px;height:14px;background:#fff"></div>
<div class="t" style="left:315px;top:50px;">Value</div>
<div class="t" style="left:202px;top:68px;">File Size</div>
<div class="t" style="left:312px;top:68px;">564,285 Bytes</div>
<div class="t" style="left:202px;top:84px;">Game Version</div>
<div class="t" style="left:312px;top:84px;">War3:TFT1.21 build 6052</div>
<div class="t" style="left:202px;top:100px;">Replay Length</div>
<div class="t" style="left:312px;top:100px;">17min14sec22</div>
<div class="t" style="left:202px;top:116px;">Game Name</div>
<div class="t" style="left:312px;top:116px;"><span class="c">本地遊戲（唯美♂呀森</span></div>
<div class="t" style="left:202px;top:132px;">Map</div>
<div class="t" style="left:312px;top:132px;">Maps\Download\112B_T...</div>
<div class="t" style="left:202px;top:148px;">Creator</div>
<div class="t" style="left:312px;top:148px;"><span class="c">唯美♂呀森</span></div>
<div class="t" style="left:202px;top:164px;">Game Type</div>
<div class="t" style="left:312px;top:164px;">Custom Game</div>
<div class="t" style="left:202px;top:180px;">Start Spot</div>
<div class="t" style="left:312px;top:180px;">12</div>
<div class="b" style="left:308px;top:405px;">Chat Log</div>
<div class="lv" style="left:194px;top:421px;width:277px;height:153px;"></div>
<div class="hd" style="left:196px;top:423px;width:259px;height:20px;"></div>
<div class="t" style="left:205px;top:425px;">Player</div>
<div style="left:249px;top:425px;width:1px;height:14px;background:#c7c5b2"></div>
<div style="left:250px;top:425px;width:1px;height:14px;background:#fff"></div>
<div class="t" style="left:263px;top:425px;">Time</div>
<div style="left:299px;top:425px;width:1px;height:14px;background:#c7c5b2"></div>
<div style="left:300px;top:425px;width:1px;height:14px;background:#fff"></div>
<div class="t" style="left:311px;top:425px;">To</div>
<div style="left:349px;top:425px;width:1px;height:14px;background:#c7c5b2"></div>
<div style="left:350px;top:425px;width:1px;height:14px;background:#fff"></div>
<div class="t" style="left:360px;top:425px;">Content</div>
<div class="t" style="left:202px;top:443px;">?<span class="c">舐</span>??...</div>
<div class="t" style="left:260px;top:443px;">00:38</div>
<div class="t" style="left:308px;top:443px;">allies</div>
<div class="t" style="left:357px;top:443px;">cp</div>
<div class="t" style="left:202px;top:459px;">?<span class="c">舐</span>??...</div>
<div class="t" style="left:260px;top:459px;">02:09</div>
<div class="t" style="left:308px;top:459px;">allies</div>
<div class="t" style="left:357px;top:459px;">= =<span class="c">敢都得</span></div>
<div class="t" style="left:202px;top:475px;">?<span class="c">舐</span>??...</div>
<div class="t" style="left:260px;top:475px;">02:19</div>
<div class="t" style="left:308px;top:475px;">allies</div>
<div class="t" style="left:357px;top:475px;"><span class="c">搵人上</span>--</div>
<div class="t" style="left:202px;top:491px;">?<span class="c">舐</span>??...</div>
<div class="t" style="left:260px;top:491px;">02:20</div>
<div class="t" style="left:308px;top:491px;">allies</div>
<div class="t" style="left:357px;top:491px;"><span class="c">我要</span>cp--</div>
<div class="t" style="left:202px;top:507px;">?<span class="c">舐</span>??...</div>
<div class="t" style="left:260px;top:507px;">02:21</div>
<div class="t" style="left:308px;top:507px;">allies</div>
<div class="t" style="left:357px;top:507px;"><span class="c">唔該</span></div>
<div class="t" style="left:202px;top:523px;">?<span class="c">舐</span>??...</div>
<div class="t" style="left:260px;top:523px;">07:57</div>
<div class="t" style="left:308px;top:523px;">allies</div>
<div class="t" style="left:357px;top:523px;">a_a<span class="c">好彩</span></div>
<div class="t" style="left:202px;top:539px;">?<span class="c">嗆</span>??</div>
<div class="t" style="left:260px;top:539px;">08:04</div>
<div class="t" style="left:308px;top:539px;">allies</div>
<div class="t" style="left:357px;top:539px;">thx</div>
<div class="vtrack" style="left:455px;top:423px;width:17px;height:134px;"></div>
<div class="sb" style="left:456px;top:424px;width:15px;height:15px;"><svg width="10" height="10" viewBox="0 0 9 9" style="position:absolute;left:2.5px;top:2.5px"><path d="M0.4 6.3 L4.5 2.2 L8.6 6.3 L7.2 7.7 L4.5 5 L1.8 7.7Z" fill="#4d6185"/></svg></div>
<div class="sb" style="left:456px;top:541px;width:15px;height:15px;"><svg width="10" height="10" viewBox="0 0 9 9" style="position:absolute;left:2.5px;top:2.5px"><path d="M0.4 2.7 L4.5 6.8 L8.6 2.7 L7.2 1.3 L4.5 4 L1.8 1.3Z" fill="#4d6185"/></svg></div>
<div class="thumb vth" style="left:456px;top:441px;width:15px;height:10px;"></div>
<div class="htrack" style="left:196px;top:557px;width:259px;height:17px;"></div>
<div class="sb" style="left:197px;top:558px;width:15px;height:15px;"><svg width="10" height="10" viewBox="0 0 9 9" style="position:absolute;left:2.5px;top:2.5px"><path d="M6.3 0.4 L2.2 4.5 L6.3 8.6 L7.7 7.2 L5 4.5 L7.7 1.8Z" fill="#4d6185"/></svg></div>
<div class="sb" style="left:439px;top:558px;width:15px;height:15px;"><svg width="10" height="10" viewBox="0 0 9 9" style="position:absolute;left:2.5px;top:2.5px"><path d="M2.7 0.4 L6.8 4.5 L2.7 8.6 L1.3 7.2 L4 4.5 L1.3 1.8Z" fill="#4d6185"/></svg></div>
<div class="thumb hth" style="left:214px;top:558px;width:208px;height:15px;"><div class="hgrip" style="left:100px"></div></div>
<div style="left:455px;top:557px;width:16px;height:17px;background:#f6f5f0"></div>
<div class="b" style="left:486px;top:31px;">Actions</div>
<div class="nav" style="left:544px;top:32px;width:19px;height:11px"><span>&lt;&lt;</span></div>
<div class="nav" style="left:566px;top:32px;width:14px;height:11px"><span>&lt;</span></div>
<div class="nav" style="left:582px;top:32px;width:14px;height:11px"><span>&gt;</span></div>
<div class="nav" style="left:598px;top:32px;width:19px;height:11px"><span>&gt;&gt;</span></div>
<div class="t" style="left:623px;top:31px;white-space:pre">Page:  106/142</div>
<div class="lv" style="left:477px;top:46px;width:540px;height:528px;"></div>
<div class="hd" style="left:479px;top:48px;width:521px;height:20px;"></div>
<div class="t" style="left:488px;top:50px;">Player</div>
<div style="left:577px;top:50px;width:1px;height:14px;background:#c7c5b2"></div>
<div style="left:578px;top:50px;width:1px;height:14px;background:#fff"></div>
<div class="t" style="left:591px;top:50px;">Time</div>
<div style="left:627px;top:50px;width:1px;height:14px;background:#c7c5b2"></div>
<div style="left:628px;top:50px;width:1px;height:14px;background:#fff"></div>
<div class="t" style="left:638px;top:50px;">Action</div>
<div style="left:479px;top:68px;width:521px;height:489px;overflow:hidden">
<div class="t" style="left:6px;top:0px;">?<span class="c">蹞　</span>?</div>
<div class="t" style="left:110px;top:0px;">11:53</div>
<div class="t" style="left:156px;top:0px;white-space:pre">Right Click  Target:(-9.09,50.92)</div>
<div class="t" style="left:6px;top:16px;">sting</div>
<div class="t" style="left:110px;top:16px;">11:53</div>
<div class="t" style="left:156px;top:16px;white-space:pre">Put Item 8  Target:(52.35,-59.58)</div>
<div class="t" style="left:6px;top:32px;">?<span class="c">舐</span>??<span class="c">　</span>?<span class="c">璉</span></div>
<div class="t" style="left:110px;top:32px;">11:53</div>
<div class="t" style="left:156px;top:32px;white-space:pre">Right Click  Target:(27.22,48.57)</div>
<div class="t" style="left:6px;top:48px;">?<span class="c">蹞　</span>?</div>
<div class="t" style="left:110px;top:48px;">11:53</div>
<div class="t" style="left:156px;top:48px;white-space:pre">Right Click  Target:(-8.54,50.92)</div>
<div class="t" style="left:6px;top:64px;">?<span class="c">嗆</span>??</div>
<div class="t" style="left:110px;top:64px;">11:54</div>
<div class="t" style="left:156px;top:64px;white-space:pre">Right Click  Target:(19.06,-27.93)</div>
<div class="t" style="left:6px;top:80px;">?<span class="c">舐</span>??<span class="c">　</span>?<span class="c">璉</span></div>
<div class="t" style="left:110px;top:80px;">11:54</div>
<div class="t" style="left:156px;top:80px;white-space:pre">Right Click  Target:(31.93,48.68)</div>
<div class="t" style="left:6px;top:96px;">?<span class="c">嗆</span>??</div>
<div class="t" style="left:110px;top:96px;">11:54</div>
<div class="t" style="left:156px;top:96px;white-space:pre">Right Click  Target:(17.80,-27.56)</div>
<div class="t" style="left:6px;top:112px;">sting</div>
<div class="t" style="left:110px;top:112px;">11:54</div>
<div class="t" style="left:156px;top:112px;white-space:pre">Give Away Item  Target:(-6.28,-28.31)</div>
<div class="t" style="left:6px;top:128px;">?<span class="c">舐</span>??<span class="c">　</span>?<span class="c">璉</span></div>
<div class="t" style="left:110px;top:128px;">11:54</div>
<div class="t" style="left:156px;top:128px;white-space:pre">Right Click  Target:(30.87,48.50)</div>
<div class="t" style="left:6px;top:144px;">SmileBoy</div>
<div class="t" style="left:110px;top:144px;">11:54</div>
<div class="t" style="left:156px;top:144px;white-space:pre">Select group hotkey 1</div>
<div class="t" style="left:6px;top:160px;">?<span class="c">蹞　</span>?</div>
<div class="t" style="left:110px;top:160px;">11:54</div>
<div class="t" style="left:156px;top:160px;white-space:pre">Right Click  Target:(17.79,41.85)</div>
<div class="t" style="left:6px;top:176px;">sting</div>
<div class="t" style="left:110px;top:176px;">11:54</div>
<div class="t" style="left:156px;top:176px;white-space:pre">Right Click  Target:(-6.14,-30.50)</div>
<div class="t" style="left:6px;top:192px;">SmileBoy</div>
<div class="t" style="left:110px;top:192px;">11:54</div>
<div class="t" style="left:156px;top:192px;white-space:pre">Right Click  Target:(-15.07,-9.75)</div>
<div class="t" style="left:6px;top:208px;">SmileBoy</div>
<div class="t" style="left:110px;top:208px;">11:54</div>
<div class="t" style="left:156px;top:208px;white-space:pre">Attack  Target:(-15.53,-9.23)</div>
<div class="t" style="left:6px;top:224px;"><span class="c">頌臬</span>???</div>
<div class="t" style="left:110px;top:224px;">11:54</div>
<div class="t" style="left:156px;top:224px;white-space:pre">Select group hotkey 1</div>
<div class="t" style="left:6px;top:240px;">?<span class="c">蹞　</span>?</div>
<div class="t" style="left:110px;top:240px;">11:55</div>
<div class="t" style="left:156px;top:240px;white-space:pre">Right Click  Target:(28.97,50.02)</div>
<div class="t" style="left:6px;top:256px;">?<span class="c">舐</span>??<span class="c">　</span>?<span class="c">璉</span></div>
<div class="t" style="left:110px;top:256px;">11:55</div>
<div class="t" style="left:156px;top:256px;white-space:pre">Enter select hero skill submenu</div>
<div class="t" style="left:6px;top:272px;">?<span class="c">蹞　</span>?</div>
<div class="t" style="left:110px;top:272px;">11:55</div>
<div class="t" style="left:156px;top:272px;white-space:pre">Right Click  Target:(28.67,48.57)</div>
<div class="t" style="left:6px;top:288px;"><span class="c">頌臬</span>???</div>
<div class="t" style="left:110px;top:288px;">11:55</div>
<div class="t" style="left:156px;top:288px;white-space:pre">Select group hotkey 1</div>
<div class="t" style="left:6px;top:304px;">sting</div>
<div class="t" style="left:110px;top:304px;">11:55</div>
<div class="t" style="left:156px;top:304px;white-space:pre">Right Click  Target:(-6.28,-28.31)</div>
<div class="t" style="left:6px;top:320px;">?<span class="c">蹞　</span>?</div>
<div class="t" style="left:110px;top:320px;">11:55</div>
<div class="t" style="left:156px;top:320px;white-space:pre">Right Click  Target:(28.44,49.14)</div>
<div class="t" style="left:6px;top:336px;">?<span class="c">怠</span>??<span class="c">箄</span>?</div>
<div class="t" style="left:110px;top:336px;">11:55</div>
<div class="t" style="left:156px;top:336px;white-space:pre">Quit Game: Left</div>
<div class="t" style="left:6px;top:352px;"><span class="c">頌臬</span>???</div>
<div class="t" style="left:110px;top:352px;">11:55</div>
<div class="t" style="left:156px;top:352px;white-space:pre">Select group hotkey 1</div>
<div class="t" style="left:6px;top:368px;">sting</div>
<div class="t" style="left:110px;top:368px;">11:56</div>
<div class="t" style="left:156px;top:368px;white-space:pre">Remove 1 unit(s) from selection</div>
<div class="t" style="left:6px;top:384px;">?<span class="c">舐</span>??<span class="c">　</span>?<span class="c">璉</span></div>
<div class="t" style="left:110px;top:384px;">11:56</div>
<div class="t" style="left:156px;top:384px;white-space:pre">Unknown ID: A0JT</div>
<div class="t" style="left:6px;top:400px;"><span class="c">頌臬</span>???</div>
<div class="t" style="left:110px;top:400px;">11:56</div>
<div class="t" style="left:156px;top:400px;white-space:pre">Select group hotkey 1</div>
<div class="t" style="left:6px;top:416px;"><span class="c">頌臬</span>???</div>
<div class="t" style="left:110px;top:416px;">11:56</div>
<div class="t" style="left:156px;top:416px;white-space:pre">Select group hotkey 1</div>
<div class="t" style="left:6px;top:432px;"><span class="c">頌臬</span>???</div>
<div class="t" style="left:110px;top:432px;">11:57</div>
<div class="t" style="left:156px;top:432px;white-space:pre">Select group hotkey 2</div>
<div class="t" style="left:6px;top:448px;">?<span class="c">蹞　</span>?</div>
<div class="t" style="left:110px;top:448px;">11:57</div>
<div class="t" style="left:156px;top:448px;white-space:pre">Right Click  Target:(30.77,48.51)</div>
<div class="t" style="left:6px;top:464px;"><span class="c">摋　</span>?</div>
<div class="t" style="left:110px;top:464px;">11:57</div>
<div class="t" style="left:156px;top:464px;white-space:pre">Right Click  Target:(-47.20,-46.36)</div>
<div class="t" style="left:6px;top:480px;"><span class="c">頌臬</span>???</div>
<div class="t" style="left:110px;top:480px;">11:57</div>
<div class="t" style="left:156px;top:480px;white-space:pre">Select group hotkey 2</div>
</div>
<div style="left:481px;top:404px;width:516px;height:14px;border:1px solid #b4323a"></div>
<div class="vtrack" style="left:1000px;top:48px;width:17px;height:509px;"></div>
<div class="sb" style="left:1001px;top:49px;width:15px;height:15px;"><svg width="10" height="10" viewBox="0 0 9 9" style="position:absolute;left:2.5px;top:2.5px"><path d="M0.4 6.3 L4.5 2.2 L8.6 6.3 L7.2 7.7 L4.5 5 L1.8 7.7Z" fill="#4d6185"/></svg></div>
<div class="sb" style="left:1001px;top:541px;width:15px;height:15px;"><svg width="10" height="10" viewBox="0 0 9 9" style="position:absolute;left:2.5px;top:2.5px"><path d="M0.4 2.7 L4.5 6.8 L8.6 2.7 L7.2 1.3 L4.5 4 L1.8 1.3Z" fill="#4d6185"/></svg></div>
<div class="thumb vth" style="left:1001px;top:99px;width:15px;height:141px;"><div class="vgrip" style="top:66px"></div></div>
<div class="htrack" style="left:479px;top:557px;width:521px;height:17px;"></div>
<div class="sb" style="left:480px;top:558px;width:15px;height:15px;"><svg width="10" height="10" viewBox="0 0 9 9" style="position:absolute;left:2.5px;top:2.5px"><path d="M6.3 0.4 L2.2 4.5 L6.3 8.6 L7.7 7.2 L5 4.5 L7.7 1.8Z" fill="#4d6185"/></svg></div>
<div class="sb" style="left:984px;top:558px;width:15px;height:15px;"><svg width="10" height="10" viewBox="0 0 9 9" style="position:absolute;left:2.5px;top:2.5px"><path d="M2.7 0.4 L6.8 4.5 L2.7 8.6 L1.3 7.2 L4 4.5 L1.3 1.8Z" fill="#4d6185"/></svg></div>
<div class="thumb hth" style="left:496px;top:558px;width:441px;height:15px;"><div class="hgrip" style="left:216px"></div></div>
<div style="left:1000px;top:557px;width:17px;height:17px;background:#f6f5f0"></div>
<div class="b" style="left:551px;top:580px;">Players Information</div>
<div class="lv" style="left:194px;top:595px;width:823px;height:136px;"></div>
<div class="hd" style="left:196px;top:597px;width:804px;height:19px;"></div>
<div class="t" style="left:205px;top:599px;">Slot</div>
<div style="left:244px;top:599px;width:1px;height:13px;background:#c7c5b2"></div>
<div style="left:245px;top:599px;width:1px;height:13px;background:#fff"></div>
<div class="t" style="left:255px;top:599px;">Name</div>
<div style="left:560px;top:599px;width:1px;height:13px;background:#c7c5b2"></div>
<div style="left:561px;top:599px;width:1px;height:13px;background:#fff"></div>
<div class="t" style="left:571px;top:599px;">Controller</div>
<div style="left:631px;top:599px;width:1px;height:13px;background:#c7c5b2"></div>
<div style="left:632px;top:599px;width:1px;height:13px;background:#fff"></div>
<div class="t" style="left:641px;top:599px;">Race</div>
<div style="left:691px;top:599px;width:1px;height:13px;background:#c7c5b2"></div>
<div style="left:692px;top:599px;width:1px;height:13px;background:#fff"></div>
<div class="t" style="left:701px;top:599px;">Te...</div>
<div style="left:735px;top:599px;width:1px;height:13px;background:#c7c5b2"></div>
<div style="left:736px;top:599px;width:1px;height:13px;background:#fff"></div>
<div class="t" style="left:746px;top:599px;">Ha...</div>
<div style="left:781px;top:599px;width:1px;height:13px;background:#c7c5b2"></div>
<div style="left:782px;top:599px;width:1px;height:13px;background:#fff"></div>
<div class="t" style="left:792px;top:599px;">Actions</div>
<div style="left:836px;top:599px;width:1px;height:13px;background:#c7c5b2"></div>
<div style="left:837px;top:599px;width:1px;height:13px;background:#fff"></div>
<div class="t" style="left:847px;top:599px;">APM</div>
<div style="left:886px;top:599px;width:1px;height:13px;background:#c7c5b2"></div>
<div style="left:887px;top:599px;width:1px;height:13px;background:#fff"></div>
<div class="t" style="left:897px;top:599px;">Time played</div>
<div style="left:978px;top:599px;width:1px;height:13px;background:#c7c5b2"></div>
<div style="left:979px;top:599px;width:1px;height:13px;background:#fff"></div>
<div class="t" style="left:989px;top:599px;">Ro</div>
<div style="left:196px;top:616px;width:804px;height:98px;overflow:hidden">
<div style="left:39px;top:1px;width:765px;height:16px;background:#316ac5"></div>
<div style="left:6px;top:3px;width:11px;height:11px;border:1px solid #1c5180;background:linear-gradient(135deg,#7f9bd0,#a3b6de)"><svg width="11" height="11" viewBox="0 0 11 11" style="position:absolute;left:0;top:0"><path d="M2 4.6 L4.4 7 L8.8 2.2" fill="none" stroke="#2f7a62" stroke-width="1.8"/></svg></div>
<div style="left:23px;top:1px;width:16px;height:17px;background:#3a36a8"></div>
<div class="t w" style="left:41px;top:2px;">6</div>
<div class="t w" style="left:56px;top:2px;"><span class="c">莫問出處</span></div>
<div class="t w" style="left:372px;top:2px;">Player</div>
<div class="t w" style="left:442px;top:2px;">Orc</div>
<div class="t w" style="left:502px;top:2px;">2</div>
<div class="t w" style="left:548px;top:2px;">100</div>
<div class="t w" style="left:593px;top:2px;">1022</div>
<div class="t w" style="left:648px;top:2px;">85.66</div>
<div class="t w" style="left:699px;top:2px;">11min55sec...</div>
<div class="t w" style="left:791px;top:2px;">Un</div>
<div style="left:6px;top:20px;width:11px;height:11px;border:1px solid #1c5180;background:linear-gradient(135deg,#dcdcd7,#fff)"><svg width="11" height="11" viewBox="0 0 11 11" style="position:absolute;left:0;top:0"><path d="M2 4.6 L4.4 7 L8.8 2.2" fill="none" stroke="#21a121" stroke-width="1.8"/></svg></div>
<div style="left:23px;top:18px;width:16px;height:17px;background:#7ebff1"></div>
<div class="t" style="left:41px;top:19px;">7</div>
<div class="t" style="left:56px;top:19px;"><span class="c">小</span>ClOuD</div>
<div class="t" style="left:372px;top:19px;">Player</div>
<div class="t" style="left:442px;top:19px;">Orc</div>
<div class="t" style="left:502px;top:19px;">2</div>
<div class="t" style="left:548px;top:19px;">100</div>
<div class="t" style="left:593px;top:19px;">1552</div>
<div class="t" style="left:648px;top:19px;">91.64</div>
<div class="t" style="left:699px;top:19px;">16min56sec...</div>
<div class="t" style="left:791px;top:19px;">Un</div>
<div style="left:6px;top:37px;width:11px;height:11px;border:1px solid #1c5180;background:linear-gradient(135deg,#dcdcd7,#fff)"><svg width="11" height="11" viewBox="0 0 11 11" style="position:absolute;left:0;top:0"><path d="M2 4.6 L4.4 7 L8.8 2.2" fill="none" stroke="#21a121" stroke-width="1.8"/></svg></div>
<div style="left:23px;top:35px;width:16px;height:17px;background:#fffc01"></div>
<div class="t" style="left:41px;top:36px;">8</div>
<div class="t" style="left:56px;top:36px;"><span class="c">路小雨</span>.</div>
<div class="t" style="left:372px;top:36px;">Player</div>
<div class="t" style="left:442px;top:36px;">Orc</div>
<div class="t" style="left:502px;top:36px;">2</div>
<div class="t" style="left:548px;top:36px;">100</div>
<div class="t" style="left:593px;top:36px;">1574</div>
<div class="t" style="left:648px;top:36px;">91.94</div>
<div class="t" style="left:699px;top:36px;">17min7sec24</div>
<div class="t" style="left:791px;top:36px;">Un</div>
<div style="left:6px;top:54px;width:11px;height:11px;border:1px solid #1c5180;background:linear-gradient(135deg,#dcdcd7,#fff)"><svg width="11" height="11" viewBox="0 0 11 11" style="position:absolute;left:0;top:0"><path d="M2 4.6 L4.4 7 L8.8 2.2" fill="none" stroke="#21a121" stroke-width="1.8"/></svg></div>
<div style="left:23px;top:52px;width:16px;height:17px;background:#959697"></div>
<div class="t" style="left:41px;top:53px;">9</div>
<div class="t" style="left:56px;top:53px;">_<span class="c">諺</span>_</div>
<div class="t" style="left:372px;top:53px;">Player</div>
<div class="t" style="left:442px;top:53px;">Orc</div>
<div class="t" style="left:502px;top:53px;">2</div>
<div class="t" style="left:548px;top:53px;">100</div>
<div class="t" style="left:593px;top:53px;">1308</div>
<div class="t" style="left:648px;top:53px;">76.40</div>
<div class="t" style="left:699px;top:53px;">17min7sec24</div>
<div class="t" style="left:791px;top:53px;">Un</div>
<div style="left:6px;top:71px;width:11px;height:11px;border:1px solid #1c5180;background:linear-gradient(135deg,#dcdcd7,#fff)"><svg width="11" height="11" viewBox="0 0 11 11" style="position:absolute;left:0;top:0"><path d="M2 4.6 L4.4 7 L8.8 2.2" fill="none" stroke="#21a121" stroke-width="1.8"/></svg></div>
<div style="left:23px;top:69px;width:16px;height:17px;background:#e55bb0"></div>
<div class="t" style="left:41px;top:70px;">1.</div>
<div class="t" style="left:56px;top:70px;"><span class="c">阿ㄣ東</span></div>
<div class="t" style="left:372px;top:70px;">Player</div>
<div class="t" style="left:442px;top:70px;">Orc</div>
<div class="t" style="left:502px;top:70px;">2</div>
<div class="t" style="left:548px;top:70px;">100</div>
<div class="t" style="left:593px;top:70px;">1688</div>
<div class="t" style="left:648px;top:70px;">98.32</div>
<div class="t" style="left:699px;top:70px;">17min10sec7</div>
<div class="t" style="left:791px;top:70px;">Un</div>
<div style="left:6px;top:88px;width:11px;height:11px;border:1px solid #1c5180;background:linear-gradient(135deg,#dcdcd7,#fff)"></div>
<div style="left:23px;top:86px;width:16px;height:17px;background:#20c000"></div>
<div class="t" style="left:41px;top:87px;">1</div>
<div class="t" style="left:56px;top:87px;">Computer(Normal)</div>
<div class="t" style="left:372px;top:87px;">Computer</div>
<div class="t" style="left:442px;top:87px;">Orc</div>
<div class="t" style="left:502px;top:87px;">1</div>
<div class="t" style="left:548px;top:87px;">100</div>
<div class="t" style="left:699px;top:87px;">17min14sec</div>
<div class="t" style="left:791px;top:87px;">Un</div>
</div>
<div class="vtrack" style="left:1000px;top:597px;width:17px;height:117px;"></div>
<div class="sb" style="left:1001px;top:598px;width:15px;height:15px;"><svg width="10" height="10" viewBox="0 0 9 9" style="position:absolute;left:2.5px;top:2.5px"><path d="M0.4 6.3 L4.5 2.2 L8.6 6.3 L7.2 7.7 L4.5 5 L1.8 7.7Z" fill="#4d6185"/></svg></div>
<div class="sb" style="left:1001px;top:698px;width:15px;height:15px;"><svg width="10" height="10" viewBox="0 0 9 9" style="position:absolute;left:2.5px;top:2.5px"><path d="M0.4 2.7 L4.5 6.8 L8.6 2.7 L7.2 1.3 L4.5 4 L1.8 1.3Z" fill="#4d6185"/></svg></div>
<div class="thumb vth" style="left:1001px;top:649px;width:15px;height:33px;"><div class="vgrip" style="top:12px"></div></div>
<div class="htrack" style="left:196px;top:714px;width:804px;height:17px;"></div>
<div class="sb" style="left:197px;top:715px;width:15px;height:15px;"><svg width="10" height="10" viewBox="0 0 9 9" style="position:absolute;left:2.5px;top:2.5px"><path d="M6.3 0.4 L2.2 4.5 L6.3 8.6 L7.7 7.2 L5 4.5 L7.7 1.8Z" fill="#4d6185"/></svg></div>
<div class="sb" style="left:984px;top:715px;width:15px;height:15px;"><svg width="10" height="10" viewBox="0 0 9 9" style="position:absolute;left:2.5px;top:2.5px"><path d="M2.7 0.4 L6.8 4.5 L2.7 8.6 L1.3 7.2 L4 4.5 L1.3 1.8Z" fill="#4d6185"/></svg></div>
<div class="thumb hth" style="left:214px;top:715px;width:741px;height:15px;"><div class="hgrip" style="left:366px"></div></div>
<div style="left:1000px;top:714px;width:17px;height:17px;background:#f6f5f0"></div>
<div style="left:195px;top:615px;width:815px;height:17px;border:1px solid #b4323a"></div>
<div style="left:0px;top:738px;width:1024px;height:30px;background:linear-gradient(#1f55d0 0,#3f86f0 1px,#3573e4 3px,#2a63d8 6px,#245edb 14px,#245edb 24px,#1f50c4 28px,#1941a5 30px)"></div>
<div style="left:0px;top:738px;width:90px;height:30px;border-radius:0 9px 9px 0/0 15px 15px 0;background:linear-gradient(90deg,rgba(0,50,0,.25) 0,transparent 5%,transparent 84%,rgba(0,50,0,.4) 100%),linear-gradient(#2f8a2f 0,#68bd68 2px,#46a346 5px,#3c973c 12px,#389238 22px,#2c7a2c 28px,#256a25 30px);box-shadow:1px 0 2px #1a4a9a"></div>
<svg style="position:absolute;left:9px;top:743px" width="21" height="18" viewBox="0 0 21 18" stroke="#1c3c1c" stroke-width=".5"><path d="M3 2 Q6 0 10 2 L9 8.2 Q5.5 6.5 2 8.2Z" fill="#e8502c"/><path d="M11.5 2.6 Q15 4.2 19 2 L18 8.2 Q14 10.2 10.5 8.6Z" fill="#6cc23a"/><path d="M1.8 9.6 Q5.3 8 8.8 9.6 L7.8 16 Q4.3 14.4 0.8 16Z" fill="#3a7ee8"/><path d="M10.2 10 Q14 11.8 17.8 9.6 L16.8 16 Q13 18 9.2 16.4Z" fill="#f4c224"/></svg>
<div class="st" style="left:35px;top:744px;">開始</div>
<div style="left:101px;top:741px;width:137px;height:25px;border-radius:3px;background:linear-gradient(#5a98f4 0,#3c80ee 3px,#3a7cec 18px,#3272e2 25px);box-shadow:inset 0 0 0 1px rgba(255,255,255,.12)"></div>
<div class="tk" style="left:130px;top:745px;">信長之野望 - 魔...</div>
<div style="left:240px;top:741px;width:137px;height:25px;border-radius:3px;background:linear-gradient(#5a98f4 0,#3c80ee 3px,#3a7cec 18px,#3272e2 25px);box-shadow:inset 0 0 0 1px rgba(255,255,255,.12)"></div>
<div class="tk tks" style="left:268px;top:745px;"><b style="color:#f2ab6a;font-size:13px">3</b> Messenger</div>
<div style="left:379px;top:741px;width:137px;height:25px;border-radius:3px;background:linear-gradient(#5a98f4 0,#3c80ee 3px,#3a7cec 18px,#3272e2 25px);box-shadow:inset 0 0 0 1px rgba(255,255,255,.12)"></div>
<div class="tk tks" style="left:408px;top:745px;">vLan - 互聯對戰 ...</div>
<div style="left:518px;top:741px;width:137px;height:25px;border-radius:3px;background:linear-gradient(#1a43a8,#1e4fc0 30%,#2155c8);box-shadow:inset 1px 1px 1px #143285"></div>
<div class="tk tks" style="left:550px;top:745px;">W3G Master</div>
<div style="left:657px;top:741px;width:137px;height:25px;border-radius:3px;background:linear-gradient(#5a98f4 0,#3c80ee 3px,#3a7cec 18px,#3272e2 25px);box-shadow:inset 0 0 0 1px rgba(255,255,255,.12)"></div>
<div class="tk" style="left:688px;top:745px;">未命名 - 小畫家</div>
<svg style="position:absolute;left:109px;top:744px" width="18" height="18" viewBox="0 0 18 18"><circle cx="9" cy="9" r="8" fill="#e07818"/><circle cx="10" cy="7.5" r="5.2" fill="#3a66d0"/><circle cx="11" cy="6.5" r="2.5" fill="#6a9cf0"/><path d="M1.2 8 Q2 3 6.5 1.6 Q4.5 4.5 6 7.5 Q7.5 10.5 12 10 Q15 9.5 16.8 7 Q17.5 13 12.5 16 Q6 18.5 2.2 13 Q1 11 1.2 8Z" fill="#f09a28"/><path d="M3 9 Q4 13.5 9 14.5 Q13 15 15.5 11.5 Q12 13 8.5 12 Q5 11 3 9Z" fill="#c85010"/></svg>
<svg style="position:absolute;left:249px;top:745px" width="17" height="17" viewBox="0 0 17 17"><circle cx="5" cy="5" r="2.5" fill="#7ad0e0"/><path d="M1 13 Q1 8 5 8 Q9 8 9 13Z" fill="#7ad0e0"/><circle cx="11" cy="6" r="3" fill="#78c850"/><path d="M6 15 Q6 9.5 11 9.5 Q16 9.5 16 15Z" fill="#78c850"/></svg>
<svg style="position:absolute;left:388px;top:744px" width="17" height="17" viewBox="0 0 16 16"><rect x="0" y="3" width="15" height="11" fill="#3c4810"/><rect x="0.8" y="3.8" width="7" height="9.4" fill="#d2e028"/><g fill="#20240c"><rect x="3" y="5" width="1.4" height="1.4"/><rect x="3" y="7.5" width="1.4" height="1.4"/><rect x="3" y="10" width="1.4" height="1.4"/></g><rect x="8" y="3.8" width="4" height="9.4" fill="#8cc040"/><rect x="9" y="6" width="3" height="2" fill="#2868a0"/><rect x="9" y="10" width="4" height="2.5" fill="#c8a020"/><rect x="12.4" y="3" width="2.6" height="9" fill="#587018"/><rect x="15" y="2" width="1" height="6" fill="#b8d8f0"/></svg>
<svg style="position:absolute;left:529px;top:745px" width="17" height="17" viewBox="0 0 16 16"><rect x="0.5" y="0" width="12.5" height="13" rx="1.5" fill="#14100c"/><rect x="1.7" y="1" width="10" height="11" fill="#d6c69c"/><path d="M4 2h5v2h1.5v5h-2v2h-4v-2h-2v-4h1.5z" fill="#6e5a2c"/><rect x="5.5" y="3" width="2.5" height="3" fill="#a4463c"/><rect x="8" y="6" width="2" height="3" fill="#8a8a3c"/><rect x="2.5" y="11.2" width="13.5" height="4" rx="1.5" fill="#14100c"/><rect x="4" y="12.2" width="10.8" height="1.8" fill="#e9dcc0"/></svg>
<svg style="position:absolute;left:669px;top:744px" width="14" height="18" viewBox="0 0 14 18"><path d="M3 8 L11 8 L9 17 L5 17Z" fill="#e8e0c0" stroke="#806020" stroke-width=".6"/><path d="M4 8 L2 1 M7 8 L7 0 M10 8 L12 1" stroke="#c03030" stroke-width="1.6"/><path d="M5.5 8 L4.5 2" stroke="#3060c0" stroke-width="1.4"/><path d="M8.5 8 L9.5 2" stroke="#30a040" stroke-width="1.4"/></svg>
<svg style="position:absolute;left:368px;top:752px" width="7" height="4"><path d="M0 0H7L3.5 3.5Z" fill="#fff"/></svg>
<svg style="position:absolute;left:807px;top:746px" width="15" height="15" viewBox="0 0 15 15"><g fill="#1a1a50"><rect x="5" y="2" width="1" height="1"/><rect x="7" y="2" width="1" height="1"/><rect x="9" y="2" width="1" height="1"/><rect x="11" y="2" width="1" height="1"/><rect x="12" y="3" width="1" height="2"/></g><rect x="0.5" y="5.5" width="13" height="8" rx="1" fill="#f6f6f6" stroke="#14143c"/><g fill="#14143c"><rect x="2" y="7.5" width="1.3" height="1.6"/><rect x="4.2" y="7.5" width="1.3" height="1.6"/><rect x="6.4" y="7.5" width="1.3" height="1.6"/><rect x="8.6" y="7.5" width="1.3" height="1.6"/><rect x="10.8" y="7.5" width="1.3" height="1.6"/><rect x="2" y="10" width="1.3" height="1.6"/><rect x="4.2" y="10" width="1.3" height="1.6"/><rect x="6.4" y="10" width="1.3" height="1.6"/><rect x="8.6" y="10" width="1.3" height="1.6"/><rect x="10.8" y="10" width="1.3" height="1.6"/></g></svg>
<div style="left:834px;top:738px;width:190px;height:30px;background:linear-gradient(#0c59b9 0,#19b9f3 1px,#139ee9 3px,#1290e8 8px,#0f8aea 20px,#1082dd 26px,#0e6dcb 30px);box-shadow:inset 1px 0 0 #0a3c8c,inset 2px 0 0 #2aa8f4"></div>
<svg style="position:absolute;left:824px;top:744px" width="19" height="19" viewBox="0 0 19 19"><circle cx="9.5" cy="9.5" r="9" fill="#2f96f8" stroke="#7cc4ff" stroke-width=".9"/><path d="M2.5 6 Q5 1.5 10 1.2 Q5.5 3.5 4.5 9 Q3 8 2.5 6Z" fill="#8fd0ff" opacity=".7"/><path d="M11.6 5.4 L7.4 9.5 L11.6 13.6" fill="none" stroke="#fff" stroke-width="2.2"/></svg>
<svg style="position:absolute;left:845px;top:745px" width="16" height="16" viewBox="0 0 16 16"><rect x="0.5" y="0" width="12.5" height="13" rx="1.5" fill="#14100c"/><rect x="1.7" y="1" width="10" height="11" fill="#d6c69c"/><path d="M4 2h5v2h1.5v5h-2v2h-4v-2h-2v-4h1.5z" fill="#6e5a2c"/><rect x="5.5" y="3" width="2.5" height="3" fill="#a4463c"/><rect x="8" y="6" width="2" height="3" fill="#8a8a3c"/><rect x="2.5" y="11.2" width="13.5" height="4" rx="1.5" fill="#14100c"/><rect x="4" y="12.2" width="10.8" height="1.8" fill="#e9dcc0"/></svg>
<svg style="position:absolute;left:862px;top:745px" width="16" height="16" viewBox="0 0 16 16"><rect x="0" y="3" width="15" height="11" fill="#3c4810"/><rect x="0.8" y="3.8" width="7" height="9.4" fill="#d2e028"/><g fill="#20240c"><rect x="3" y="5" width="1.4" height="1.4"/><rect x="3" y="7.5" width="1.4" height="1.4"/><rect x="3" y="10" width="1.4" height="1.4"/></g><rect x="8" y="3.8" width="4" height="9.4" fill="#8cc040"/><rect x="9" y="6" width="3" height="2" fill="#2868a0"/><rect x="9" y="10" width="4" height="2.5" fill="#c8a020"/><rect x="12.4" y="3" width="2.6" height="9" fill="#587018"/><rect x="15" y="2" width="1" height="6" fill="#b8d8f0"/></svg>
<svg style="position:absolute;left:881px;top:745px" width="16" height="16" viewBox="0 0 16 16"><path d="M0.5 15 Q0.5 8.5 7 8.5 Q13.5 8.5 13.5 15Z" fill="#58c028"/><circle cx="7" cy="4.6" r="4" fill="#74d63c"/><circle cx="6" cy="3.6" r="1.8" fill="#b4f088"/><path d="M2.5 13.5 Q3 10.3 7 10.2 Q11 10.3 11.5 13.5Z" fill="#8ee058"/></svg>
<svg style="position:absolute;left:898px;top:745px" width="16" height="16" viewBox="0 0 16 16"><rect x="5.5" y="0.5" width="8" height="7" rx="1" fill="#74b8f6" stroke="#b8dcff"/><rect x="8" y="8" width="4" height="1.6" fill="#98b8e0"/><rect x="0.5" y="4.5" width="8.5" height="7" rx="1" fill="#9ccaf8" stroke="#d4e8ff"/><rect x="2" y="6" width="5.5" height="4" fill="#7ab4f0"/><path d="M3 12 H7 L8.5 15 H1.5Z" fill="#d8c8ec"/></svg>
<svg style="position:absolute;left:915px;top:745px" width="16" height="16" viewBox="0 0 16 16"><rect x="0.5" y="0" width="14.5" height="14.5" fill="#fff"/><path d="M1.5 1 H5.5 V7 L10.5 1 H14.5 L8.5 8 L6 11.5 L5.5 13.5 H1.5Z" fill="#e81018"/><path d="M8.5 7.5 L13.5 13 M14 8.5 V13.5 H9" stroke="#0a0a0a" stroke-width="2.2" fill="none"/></svg>
<svg style="position:absolute;left:934px;top:745px" width="16" height="16" viewBox="0 0 16 16"><rect x="0" y="1" width="15" height="14" fill="#16304e"/><path d="M0 1 H15 V4 Q7 3.5 0 8Z" fill="#8a9098" opacity=".75"/><path d="M2 9 Q4 6.5 6.5 7.5 Q9 8.5 12.5 4.5 M6.5 7.8 Q9 5 11 5.2" stroke="#fff" stroke-width="1.5" fill="none"/><rect x="0" y="12" width="15" height="3" fill="#0c1c30"/></svg>
<div class="tk" style="left:957px;top:745px;font-size:11.5px;letter-spacing:-.2px">下午 01:52</div>
</body></html>
